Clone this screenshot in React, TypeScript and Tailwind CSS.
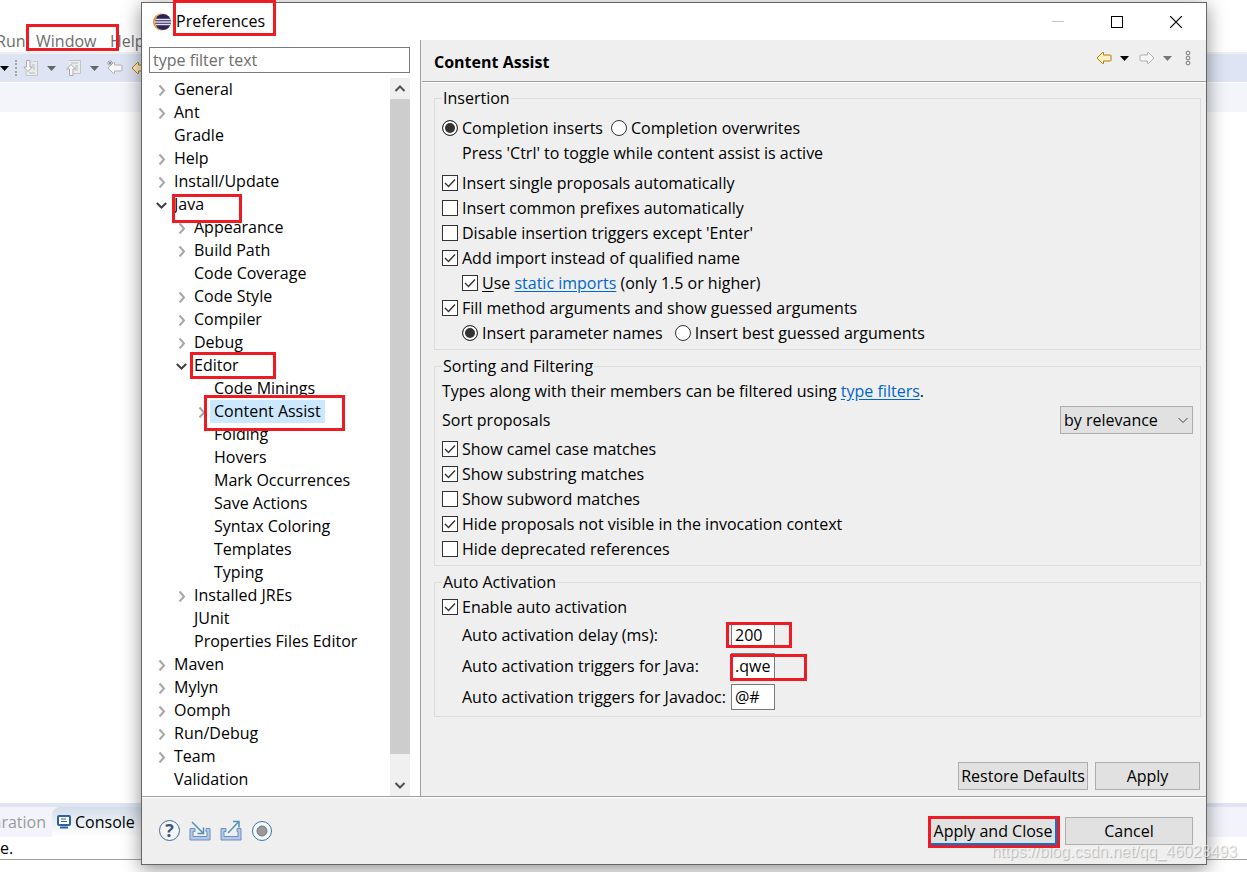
import { useState } from "react";
import type { ReactNode } from "react";

type TreeNode = {
  label: string;
  depth: 0 | 1 | 2;
  state?: "open" | "closed";
  mark?: string;
};

const tree: TreeNode[] = [
  { label: "General", depth: 0, state: "closed" },
  { label: "Ant", depth: 0, state: "closed" },
  { label: "Gradle", depth: 0 },
  { label: "Help", depth: 0, state: "closed" },
  { label: "Install/Update", depth: 0, state: "closed" },
  { label: "Java", depth: 0, state: "open", mark: "left-0.5 top-px h-[29px] w-[70px]" },
  { label: "Appearance", depth: 1, state: "closed" },
  { label: "Build Path", depth: 1, state: "closed" },
  { label: "Code Coverage", depth: 1 },
  { label: "Code Style", depth: 1, state: "closed" },
  { label: "Compiler", depth: 1, state: "closed" },
  { label: "Debug", depth: 1, state: "closed" },
  { label: "Editor", depth: 1, state: "open", mark: "left-0 -top-0.5 h-[27px] w-[86px]" },
  { label: "Code Minings", depth: 2 },
  { label: "Content Assist", depth: 2, state: "closed", mark: "-left-1.5 -top-[5px] h-9 w-[141px]" },
  { label: "Folding", depth: 2 },
  { label: "Hovers", depth: 2 },
  { label: "Mark Occurrences", depth: 2 },
  { label: "Save Actions", depth: 2 },
  { label: "Syntax Coloring", depth: 2 },
  { label: "Templates", depth: 2 },
  { label: "Typing", depth: 2 },
  { label: "Installed JREs", depth: 1, state: "closed" },
  { label: "JUnit", depth: 1 },
  { label: "Properties Files Editor", depth: 1 },
  { label: "Maven", depth: 0, state: "closed" },
  { label: "Mylyn", depth: 0, state: "closed" },
  { label: "Oomph", depth: 0, state: "closed" },
  { label: "Run/Debug", depth: 0, state: "closed" },
  { label: "Team", depth: 0, state: "closed" },
  { label: "Validation", depth: 0 },
];

const indent = ["pl-[7px]", "pl-[27px]", "pl-[47px]"];

function Mark({ className }: { className: string }) {
  return <span className={`pointer-events-none absolute z-20 border-3 border-[#ed1c24] ${className}`} />;
}

function Twisty({ state }: { state?: "open" | "closed" }) {
  return (
    <svg className="h-3 w-3 shrink-0" viewBox="0 0 12 12" fill="none" strokeWidth="2">
      {state === "closed" && <path d="M3.500 1.500 8 6.500 3.500 11.500" stroke="#a6a6a6" />}
      {state === "open" && <path d="M.8 4 5.500 8.500 10.200 4" stroke="#404040" />}
    </svg>
  );
}

function BlockArrow({ color, fill, flip }: { color: string; fill: string; flip?: boolean }) {
  return (
    <svg className={flip ? "h-4 w-4 -scale-x-100" : "h-4 w-4"} viewBox="0 0 16 16">
      <path
        d="M1 8 6.500 2.500H7.500V5H14.500L15 5.500V10.500L14.500 11H7.500V13.500H6.500Z"
        fill={fill}
        stroke={color}
        strokeLinejoin="round"
      />
    </svg>
  );
}

function DropArrow({ color }: { color: string }) {
  return (
    <svg className="h-[5px] w-[9px]" viewBox="0 0 9 5">
      <path d="M0 0H9L4.500 5Z" fill={color} />
    </svg>
  );
}

function StepIcon({ up }: { up?: boolean }) {
  return (
    <svg className="h-4 w-4" viewBox="0 0 16 16">
      <path d={up ? "M2.500 .5H14.500V13.500H6" : "M10 1.500H14.500V15.500H3V11"} fill="#ececec" stroke="#c4c4c4" />
      <path d={up ? "M5 3H12M9 6H12M9 8H12M9 10H12" : "M9 5H12M10 7H12M10 9H12M6 13H12"} stroke="#b5bac8" />
      <path
        d={up ? "M5 4.500 9.500 9H7V15.500H3.500V9H.8Z" : "M3.500 .5H7V7H9.500L5 11.500.8 7H3.500Z"}
        fill="#f7f7f7"
        stroke="#aaa"
      />
    </svg>
  );
}

function Check({ children, checked }: { children: ReactNode; checked?: boolean }) {
  return (
    <label className="flex h-[25px] items-start gap-1 leading-[25px]">
      <span className="relative mt-1 h-4 w-4 shrink-0">
        <input
          type="checkbox"
          defaultChecked={checked}
          className="peer block h-4 w-4 appearance-none border border-[#333] bg-white"
        />
        <svg
          className="pointer-events-none absolute inset-0 hidden h-4 w-4 peer-checked:block"
          viewBox="0 0 16 16"
          fill="none"
          stroke="#333"
          strokeWidth="1.400"
        >
          <path d="M3 8 6.500 11.500 13 4.500" />
        </svg>
      </span>
      <span>{children}</span>
    </label>
  );
}

function Radio({ children, name, checked }: { children: ReactNode; name: string; checked?: boolean }) {
  return (
    <label className="flex h-[25px] items-start gap-1 leading-[25px]">
      <input
        type="radio"
        name={name}
        defaultChecked={checked}
        className="mt-1 h-4 w-4 shrink-0 appearance-none rounded-full border border-[#333] bg-white checked:bg-[#333] checked:shadow-[inset_0_0_0_2px_#fff]"
      />
      <span>{children}</span>
    </label>
  );
}

function Group({ title, className, children }: { title: string; className: string; children: ReactNode }) {
  return (
    <fieldset className={`border border-[#dcdcdc] px-[7px] pb-[3px] ${className}`}>
      <legend className="px-px leading-5">{title}</legend>
      {children}
    </fieldset>
  );
}

function Field({ id, label, value, mark }: { id: string; label: string; value: string; mark?: string }) {
  return (
    <div className="flex h-[31px] items-start pt-0.5 pl-5 leading-[26px]">
      <label htmlFor={id} className="w-[269px] whitespace-nowrap">
        {label}
      </label>
      <span className="relative">
        <input
          id={id}
          defaultValue={value}
          className="block h-[26px] w-11 border border-[#7a7a7a] bg-white px-[3px] outline-none"
        />
        {mark && <Mark className={mark} />}
      </span>
    </div>
  );
}

function Button({ children, className }: { children: ReactNode; className: string }) {
  return (
    <button className={`h-7 border bg-[#e1e1e1] text-center whitespace-nowrap ${className}`}>{children}</button>
  );
}

function Workbench() {
  return (
    <div className="absolute inset-0 flex flex-col overflow-hidden bg-white">
      <div className="flex h-[52px] items-end pb-px text-[#6d6d6d]">
        <span className="w-9 -indent-1">Run</span>
        <span className="relative w-[74px]">
          Window
          <Mark className="-top-[7px] -left-2.5 h-[27px] w-[93px]" />
        </span>
        <span>Help</span>
      </div>
      <div className="flex h-[31px] items-center border-t-2 border-b border-t-[#f0f0f0] border-b-white bg-[#dfe4f4]">
        <DropArrow color="#000" />
        <span className="mx-1.5 h-4 border-l-2 border-dotted border-[#a5a59a]" />
        <StepIcon />
        <span className="w-2" />
        <DropArrow color="#666" />
        <span className="w-2.5" />
        <StepIcon up />
        <span className="w-2" />
        <DropArrow color="#666" />
        <span className="relative ml-2">
          <BlockArrow color="#b0b0b0" fill="#f6f6f6" />
          <svg className="absolute top-0 left-0 h-1.5 w-1.5" viewBox="0 0 6 6" stroke="#888">
            <path d="M3 0V6M0 3H6M1 1 5 5M5 1 1 5" strokeWidth=".7" />
          </svg>
        </span>
        <span className="ml-2">
          <BlockArrow color="#b9770e" fill="#fff3c4" />
        </span>
      </div>
      <div className="h-[29px] bg-[#f3f5fb]" />
      <div className="grow" />
      <div className="flex h-[34px] border-t-4 border-[#dfe4f4] bg-[#f3f4fb]">
        <span className="flex w-[52px] items-center justify-end pr-1.5 whitespace-nowrap text-[#9a9a9a]">
          aration
        </span>
        <span className="flex w-40 items-center gap-[3px] rounded-tl-lg bg-linear-to-b from-[#d3deea] to-white pl-1">
          <svg className="h-4 w-4" viewBox="0 0 16 16">
            <rect x="2" y="2" width="12" height="9" rx="1" fill="#fff" stroke="#2f5fa5" strokeWidth="2" />
            <path d="M5 5H10M5 7.500H11" stroke="#2f5fa5" />
            <path d="M4 13.500H12" stroke="#2f5fa5" strokeWidth="2" />
          </svg>
          Console
        </span>
      </div>
      <div className="h-[23px] border-b border-[#a0a0a0] leading-[23px]">e.</div>
      <div className="h-3" />
    </div>
  );
}

function TitleBar() {
  return (
    <header className="flex h-[37px] items-center bg-white pl-[11px]">
      <svg className="h-[18px] w-[18px]" viewBox="0 0 18 18">
        <circle cx="8.500" cy="9" r="8.500" fill="#f7941e" />
        <circle cx="10" cy="9" r="8.300" fill="#fff" />
        <circle cx="10" cy="9" r="8" fill="#2c2255" />
        <path d="M2.500 6.500H17.500M2 9H18M2.500 11.500H17.500" stroke="#e4e1f0" strokeWidth="1.300" />
      </svg>
      <h1 className="relative ml-[5px] grow self-start leading-9">
        Preferences
        <Mark className="-top-[3px] -left-[3px] h-9 w-[103px]" />
      </h1>
      <div className="flex items-center gap-[47px] pr-6">
        <button aria-label="Minimize" className="h-px w-3 bg-[#c4c4c4]" />
        <button aria-label="Maximize" className="h-3 w-3 border border-black" />
        <button aria-label="Close">
          <svg className="block h-3 w-3" viewBox="0 0 12 12" stroke="#000" strokeWidth="1.200">
            <path d="M0 0 12 12M12 0 0 12" />
          </svg>
        </button>
      </div>
    </header>
  );
}

function Sidebar() {
  const [selected, setSelected] = useState("Content Assist");

  return (
    <aside className="flex w-[279px] shrink-0 flex-col border-r border-[#a0a0a0] bg-white pt-[7px] pr-2.5 pl-[7px]">
      <input
        aria-label="type filter text"
        placeholder="type filter text"
        className="h-[26px] border border-[#7a7a7a] px-[3px] outline-none placeholder:text-[#6d6d6d]"
      />
      <div className="mt-[5px] flex grow">
        <ul className="grow pb-[5px]">
          {tree.map((node) => (
            <li key={node.label} className={`flex h-[23px] items-center gap-0.5 ${indent[node.depth]}`}>
              <Twisty state={node.state} />
              <span className="relative">
                <button
                  onClick={() => setSelected(node.label)}
                  className={`block px-1 pb-px leading-[22px] whitespace-nowrap ${selected === node.label ? "bg-[#cce8ff]" : ""}`}
                >
                  {node.label}
                </button>
                {node.mark && <Mark className={node.mark} />}
              </span>
            </li>
          ))}
        </ul>
        <div className="flex w-5 flex-col items-center bg-[#f0f0f0]">
          <svg className="h-[21px] w-3" viewBox="0 0 12 21" fill="none" stroke="#505050" strokeWidth="2">
            <path d="M1.500 13 6 8.500 10.500 13" />
          </svg>
          <div className="w-full grow bg-[#cdcdcd]" />
          <svg className="mt-[21px] h-[21px] w-3" viewBox="0 0 12 21" fill="none" stroke="#505050" strokeWidth="2">
            <path d="M1.500 8 6 12.500 10.500 8" />
          </svg>
        </div>
      </div>
    </aside>
  );
}

function PageHeader() {
  return (
    <div className="flex h-[43px] items-center justify-between border-b border-white pl-3 shadow-[inset_0_-1px_#a0a0a0]">
      <h2 className="pt-px font-bold">Content Assist</h2>
      <div className="flex items-center pr-3.5 pb-1.5">
        <button aria-label="Back">
          <BlockArrow color="#b9770e" fill="#fff3c4" />
        </button>
        <button aria-label="Back history" className="ml-2">
          <DropArrow color="#000" />
        </button>
        <button aria-label="Forward" className="ml-2.5">
          <BlockArrow color="#b0b0b0" fill="#f6f6f6" flip />
        </button>
        <button aria-label="Forward history" className="ml-2">
          <DropArrow color="#75757c" />
        </button>
        <button aria-label="View menu" className="ml-3">
          <svg className="h-4 w-2" viewBox="0 0 8 16" fill="none" stroke="#777">
            <circle cx="4" cy="3" r="1.900" />
            <circle cx="4" cy="8" r="1.900" />
            <circle cx="4" cy="13" r="1.900" />
          </svg>
        </button>
      </div>
    </div>
  );
}

function ContentAssistPage() {
  return (
    <section className="flex min-w-0 grow flex-col pl-px">
      <PageHeader />
      <div className="flex grow flex-col gap-1.5 pt-[5px] pr-[5px] pb-1.5 pl-3">
        <Group title="Insertion" className="pt-2">
          <div className="flex gap-2">
            <Radio name="completion" checked>
              Completion inserts
            </Radio>
            <Radio name="completion">Completion overwrites</Radio>
          </div>
          <p className="mb-[5px] pl-5 leading-[25px]">Press 'Ctrl' to toggle while content assist is active</p>
          <Check checked>Insert single proposals automatically</Check>
          <Check>Insert common prefixes automatically</Check>
          <Check>Disable insertion triggers except 'Enter'</Check>
          <Check checked>Add import instead of qualified name</Check>
          <div className="pl-5">
            <Check checked>
              <u className="underline-offset-2">U</u>se{" "}
              <a href="#static-imports" className="text-[#0066cc] underline underline-offset-2">
                static imports
              </a>{" "}
              (only 1.5 or higher)
            </Check>
          </div>
          <Check checked>Fill method arguments and show guessed arguments</Check>
          <div className="flex gap-3 pl-5">
            <Radio name="guess" checked>
              Insert parameter names
            </Radio>
            <Radio name="guess">Insert best guessed arguments</Radio>
          </div>
        </Group>

        <Group title="Sorting and Filtering" className="pt-[3px]">
          <p className="leading-[25px]">
            Types along with their members can be filtered using{" "}
            <a href="#type-filters" className="text-[#0066cc] underline underline-offset-2">
              type filters
            </a>
            .
          </p>
          <div className="flex h-[33px] items-start justify-between pt-0.5 leading-7">
            <label htmlFor="sort">Sort proposals</label>
            <span className="relative">
              <select
                id="sort"
                className="block h-7 w-[133px] appearance-none border border-[#adadad] bg-[#e1e1e1] pl-[3px] leading-[26px] outline-none"
              >
                <option>by relevance</option>
                <option>alphabetically</option>
              </select>
              <svg
                className="pointer-events-none absolute top-2.5 right-1 h-2 w-3"
                viewBox="0 0 12 8"
                fill="none"
                stroke="#444"
              >
                <path d="M1.500 2 6 6.500 10.500 2" />
              </svg>
            </span>
          </div>
          <Check checked>Show camel case matches</Check>
          <Check checked>Show substring matches</Check>
          <Check>Show subword matches</Check>
          <Check checked>Hide proposals not visible in the invocation context</Check>
          <Check>Hide deprecated references</Check>
        </Group>

        <Group title="Auto Activation" className="pt-[3px]">
          <Check checked>Enable auto activation</Check>
          <Field
            id="delay"
            label="Auto activation delay (ms):"
            value="200"
            mark="-left-[5px] top-0 h-[26px] w-[66px]"
          />
          <Field
            id="java"
            label="Auto activation triggers for Java:"
            value=".qwertyuiop"
            mark="-left-px top-px h-[27px] w-[77px]"
          />
          <Field id="javadoc" label="Auto activation triggers for Javadoc:" value="@#" />
        </Group>

        <div className="mt-auto flex justify-end gap-[7px] pr-px">
          <Button className="w-[130px] border-[#adadad]">Restore Defaults</Button>
          <Button className="w-[105px] border-[#adadad]">Apply</Button>
        </div>
      </div>
    </section>
  );
}

function Footer() {
  return (
    <footer className="flex h-[68px] items-center justify-between border-t border-[#a0a0a0] pr-[13px] pl-[17px] shadow-[inset_0_1px_#fff]">
      <div className="flex items-center gap-[9px]">
        <button
          aria-label="Help"
          className="h-[21px] w-[21px] rounded-full border border-[#4a6890] bg-[#f3f6fa] text-lg leading-[19px] font-bold text-[#435574]"
        >
          ?
        </button>
        <button aria-label="Import">
          <svg className="block h-[22px] w-[22px]" viewBox="0 0 22 22" fill="none">
            <path d="M6 8.500H1V20H21V8.500H17V11.500H18V16.500H4V11.500H6Z" fill="#b5c9e6" stroke="#6c8fc2" />
            <path d="M3 2 14 13M14.500 7.500V13.500H8.500" stroke="#4f93bd" strokeWidth="1.500" />
          </svg>
        </button>
        <button aria-label="Export">
          <svg className="block h-[22px] w-[22px]" viewBox="0 0 22 22" fill="none">
            <path d="M6 8.500H1V20H21V8.500H17V11.500H18V16.500H4V11.500H6Z" fill="#b5c9e6" stroke="#6c8fc2" />
            <path d="M8 13 18.500 2M13 1.500H19V7.500" stroke="#4f93bd" strokeWidth="1.500" />
          </svg>
        </button>
        <button aria-label="Record">
          <svg className="block h-[22px] w-[22px]" viewBox="0 0 22 22">
            <circle cx="11" cy="11" r="9.500" fill="#f3f8fc" stroke="#3b74a8" />
            <circle cx="11" cy="11" r="5" fill="#999" stroke="#777" />
          </svg>
        </button>
      </div>
      <div className="flex gap-2">
        <span className="relative">
          <Button className="w-32 border-2 border-[#0078d7]">Apply and Close</Button>
          <Mark className="-top-px -left-px h-8 w-[132px]" />
        </span>
        <Button className="w-32 border-[#adadad]">Cancel</Button>
      </div>
    </footer>
  );
}

export default function App() {
  return (
    <div className="relative min-h-screen overflow-hidden pt-0.5 pr-10 pb-[7px] pl-[141px] font-['Open_Sans','Noto_Sans',sans-serif] text-base leading-5 text-black">
      <Workbench />
      <main className="relative border border-[#666] bg-[#efefef] shadow-[0_4px_18px_rgba(0,0,0,0.45)]">
        <TitleBar />
        <div className="flex">
          <Sidebar />
          <ContentAssistPage />
        </div>
        <Footer />
      </main>
      <span className="absolute right-2.5 bottom-2 text-base text-white/60 font-['Liberation_Sans',sans-serif] [text-shadow:1px_1px_1px_rgba(0,0,0,0.25)]">
        https://blog.csdn.net/qq_46028493
      </span>
    </div>
  );
}
